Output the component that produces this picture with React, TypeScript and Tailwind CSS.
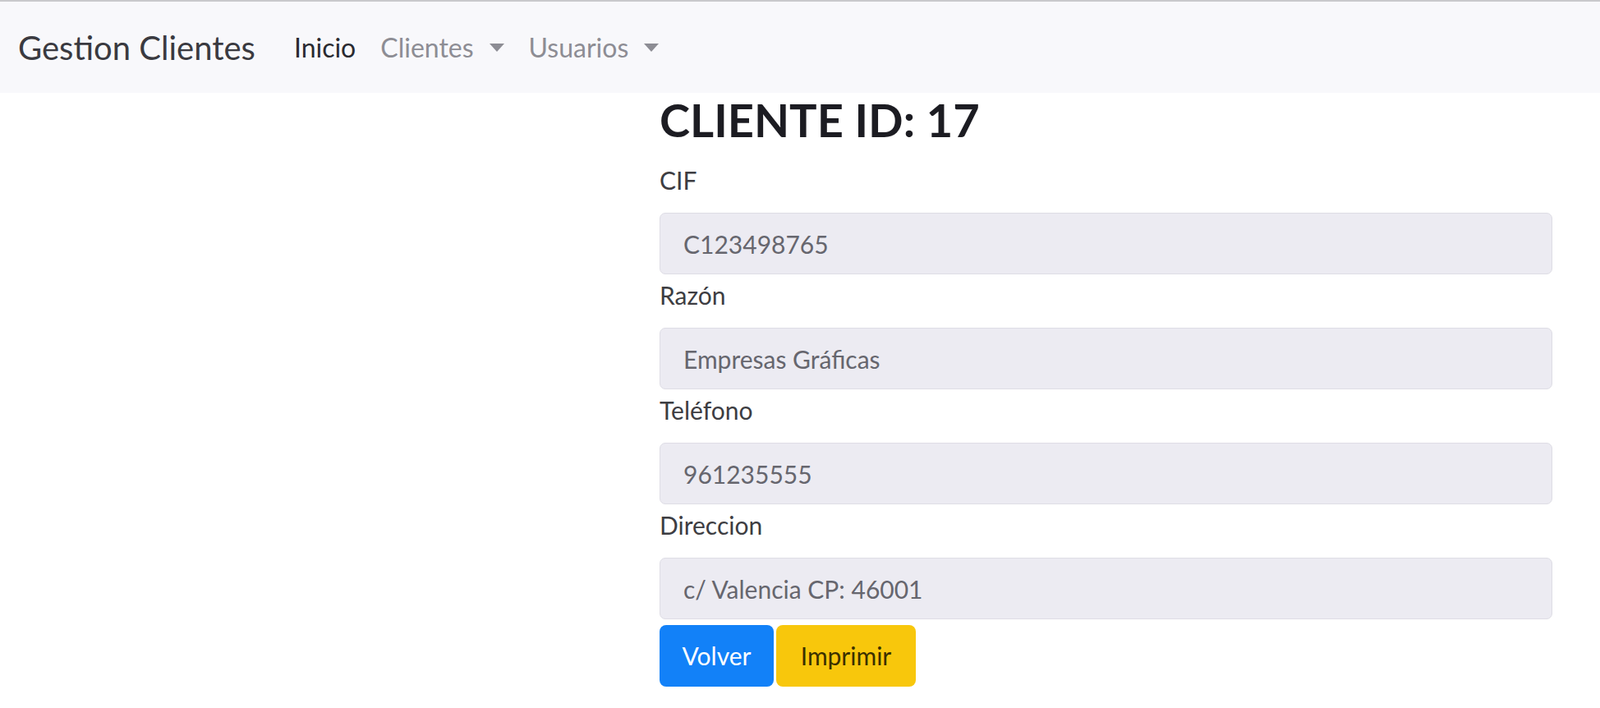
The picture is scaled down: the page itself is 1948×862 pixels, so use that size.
// Ficha de cliente - vista de solo lectura
const campos = [
  { label: 'CIF', value: 'C123498765' },
  { label: 'Razón', value: 'Empresas Gráficas' },
  { label: 'Teléfono', value: '961235555' },
  { label: 'Direccion', value: 'c/ Valencia CP: 46001' },
];

const Caret = () => (
  <span className="ml-[19px] inline-block h-0 w-0 border-x-[9px] border-t-[10px] border-x-transparent border-t-current align-middle" />
);

export default function App() {
  return (
    <div className="min-h-screen bg-white font-['Lato','Liberation_Sans',sans-serif] text-[#212529]">
      {/* Navbar */}
      <nav className="flex h-[113px] items-center border-t-2 border-[#c9c9cc] bg-[#f8f8fb] pl-[22px]">
        <a className="text-[40px] leading-none text-[#3a3a40]">Gestion Clientes</a>
        <ul className="ml-[47px] flex items-center gap-[30px] text-[32px] leading-none">
          <li className="text-[#2a2a30]">Inicio</li>
          <li className="flex items-center text-[#8d8d94]">
            Clientes
            <Caret />
          </li>
          <li className="flex items-center text-[#8d8d94]">
            Usuarios
            <Caret />
          </li>
        </ul>
      </nav>

      {/* Contenido */}
      <main className="pl-[803px] pr-[58px]">
        <h1 className="text-[56px] font-bold leading-[66px] text-[#1c1c22]">CLIENTE ID: 17</h1>
        <form className="mt-[22px]">
          {campos.map((c) => (
            <div key={c.label} className="mb-[7px] last:mb-0">
              <label className="block text-[30px] leading-[36px] text-[#3d3d42]">{c.label}</label>
              <input
                readOnly
                value={c.value}
                className="mt-[22px] block h-[75px] w-full rounded-[7px] border border-[#dedde5] bg-[#ecebf2] px-[28px] text-[30px] text-[#66666e] outline-none"
              />
            </div>
          ))}
          <div className="flex gap-[3px]">
            <button
              type="button"
              className="h-[75px] w-[139px] rounded-[8px] bg-[#1281f8] text-[30px] text-white"
            >
              Volver
            </button>
            <button
              type="button"
              className="h-[75px] w-[170px] rounded-[8px] bg-[#f8c70c] text-[30px] text-[#3b3000]"
            >
              Imprimir
            </button>
          </div>
        </form>
      </main>
    </div>
  );
}
